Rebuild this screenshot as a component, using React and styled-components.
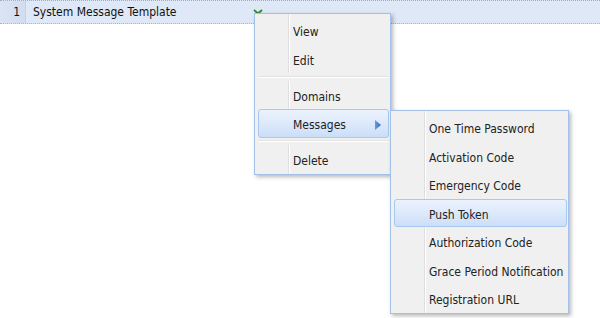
import React from "react";
import styled, { createGlobalStyle } from "styled-components";

const GlobalStyle = createGlobalStyle`
  html, body { margin: 0; padding: 0; background: #fff; }
  body {
    font-family: "DejaVu Sans Condensed", "DejaVu Sans", sans-serif;
    font-size: 12px;
  }
`;

const Page = styled.div`
  position: relative;
  width: 600px;
  height: 318px;
  overflow: hidden;
  background: #fff;
`;

const GridRow = styled.div`
  position: relative;
  display: flex;
  height: 22px;
  background: #dfe8f6;
  border-top: 1px dotted #a9a9b5;
  border-bottom: 1px dotted #a3b1d8;
  color: #111;
`;

const NumberCell = styled.div`
  width: 26px;
  box-sizing: border-box;
  padding-right: 5px;
  display: flex;
  align-items: center;
  justify-content: flex-end;
  background: linear-gradient(to right, #dbe4f3 0%, #d2ddf0 100%);
  border-right: 1px solid #c4d1ea;
`;

const TextCell = styled.div`
  padding-left: 7px;
  display: flex;
  align-items: center;
`;

const Trigger = styled.svg`
  position: absolute;
  left: 253px;
  top: 8px;
`;

const Menu = styled.div`
  position: absolute;
  left: ${(p) => p.$left}px;
  top: ${(p) => p.$top}px;
  width: ${(p) => p.$width}px;
  box-sizing: border-box;
  padding: 2px 1px 0 3px;
  border: 1px solid #a3c0e8;
  background:
    linear-gradient(
      to right,
      transparent 33px,
      #dedede 33px,
      #dedede 34px,
      #ffffff 34px,
      #ffffff 35px,
      transparent 35px
    ),
    #f0f0f0;
  box-shadow: 2px 2px 4px rgba(0, 0, 0, 0.28);
  color: #222;
`;

const Item = styled.div`
  position: relative;
  height: 28.5px;
  box-sizing: border-box;
  padding: 4px 0 0 34px;
  display: flex;
  align-items: center;
  border: 1px solid ${(p) => (p.$active ? "#a9c8f0" : "transparent")};
  border-radius: 3px;
  background: ${(p) =>
    p.$active ? "linear-gradient(to bottom, #ebf2fd 0%, #dde9fb 50%, #cbdef8 100%)" : "transparent"};
  white-space: nowrap;
`;

const Separator = styled.div`
  height: 7.5px;
  display: flex;
  align-items: center;
  background: #f0f0f0;
  &::after {
    content: "";
    flex: 1;
    height: 0;
    border-top: 1px solid #e2e2e2;
    border-bottom: 1px solid #ffffff;
  }
`;

const Arrow = styled.svg`
  position: absolute;
  right: 7px;
  top: 10px;
`;

const mainItems = [
  { label: "View" },
  { label: "Edit" },
  { sep: true },
  { label: "Domains" },
  { label: "Messages", active: true, sub: true },
  { sep: true },
  { label: "Delete" },
];

const subItems = [
  "One Time Password",
  "Activation Code",
  "Emergency Code",
  "Push Token",
  "Authorization Code",
  "Grace Period Notification",
  "Registration URL",
];

export default function App() {
  return (
    <Page>
      <GlobalStyle />
      <GridRow>
        <NumberCell>1</NumberCell>
        <TextCell>System Message Template</TextCell>
        <Trigger width="10" height="6" viewBox="0 0 10 6">
          <path d="M1 1 L5 4.5 L9 1" fill="none" stroke="#2f8f2f" strokeWidth="2" />
        </Trigger>
      </GridRow>

      <Menu $left={254} $top={13} $width={137}>
        {mainItems.map((it, i) =>
          it.sep ? (
            <Separator key={i} />
          ) : (
            <Item key={i} $active={it.active}>
              {it.label}
              {it.sub && (
                <Arrow width="6" height="10" viewBox="0 0 6 10">
                  <defs>
                    <linearGradient id="arr" x1="0" y1="0" x2="1" y2="0">
                      <stop offset="0" stopColor="#6a9de0" />
                      <stop offset="1" stopColor="#2f6cc4" />
                    </linearGradient>
                  </defs>
                  <polygon points="0,0 6,5 0,10" fill="url(#arr)" />
                </Arrow>
              )}
            </Item>
          )
        )}
      </Menu>

      <Menu $left={390} $top={110} $width={179}>
        {subItems.map((label) => (
          <Item key={label} $active={label === "Push Token"}>
            {label}
          </Item>
        ))}
      </Menu>
    </Page>
  );
}
